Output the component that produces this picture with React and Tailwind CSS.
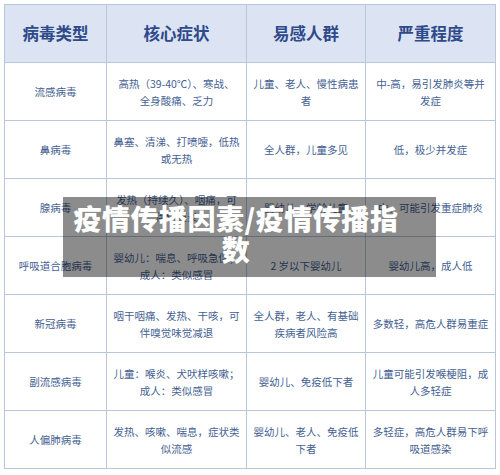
import React from "react";

const headers = ["病毒类型", "核心症状", "易感人群", "严重程度"];

const rows = [
  [["流感病毒"], ["高热（39-40℃）、寒战、", "全身酸痛、乏力"], ["儿童、老人、慢性病患", "者"], ["中-高，易引发肺炎等并", "发症"]],
  [["鼻病毒"], ["鼻塞、清涕、打喷嚏，低热", "或无热"], ["全人群，儿童多见"], ["低，极少并发症"]],
  [["腺病毒"], ["发热（持续久）、咽痛，可", "伴结膜炎"], ["婴幼儿、学龄儿童"], ["中，可能引发重症肺炎"]],
  [["呼吸道合胞病毒"], ["婴幼儿：喘息、呼吸急促；", "成人：类似感冒"], ["2 岁以下婴幼儿"], ["婴幼儿高，成人低"]],
  [["新冠病毒"], ["咽干咽痛、发热、干咳，可", "伴嗅觉味觉减退"], ["全人群，老人、有基础", "疾病者风险高"], ["多数轻，高危人群易重症"]],
  [["副流感病毒"], ["儿童：喉炎、犬吠样咳嗽；", "成人：类似感冒"], ["婴幼儿、免疫低下者"], ["儿童可能引发喉梗阻，成", "人多轻症"]],
  [["人偏肺病毒"], ["发热、咳嗽、喘息，症状类", "似流感"], ["婴幼儿、老人、免疫低", "下者"], ["多轻症，高危人群易下呼", "吸道感染"]],
];

const font = { fontFamily: '"Noto Sans CJK SC", "Noto Sans", sans-serif' };

export default function App() {
  return (
    <div className="relative w-[500px] h-[475px] bg-white overflow-hidden" style={font}>
      <div className="absolute left-[4px] top-[4px] grid grid-cols-[102px_140px_119px_130px] border-l border-t border-[#b9c7dc]">
        {headers.map((h) => (
          <div
            key={h}
            className="h-[58px] flex items-center justify-center bg-[#dce4f3] border-r border-b border-[#b9c7dc] text-[16.5px] font-bold text-[#2e4a8a]"
          >
            {h}
          </div>
        ))}
        {rows.map((row, i) =>
          row.map((cell, j) => (
            <div
              key={i + "-" + j}
              className="h-[58px] flex flex-col items-center justify-center border-r border-b border-[#b9c7dc] text-[10.5px] leading-[17px] text-[#455f92] whitespace-nowrap"
            >
              {cell.map((line) => (
                <span key={line}>{line}</span>
              ))}
            </div>
          ))
        )}
      </div>

      <div className="absolute left-[63px] top-[197px] w-[373px] h-[80px] pr-[27px] pb-[6px] bg-black/45 flex flex-col items-center justify-center text-white font-black text-[28px] leading-[31px] tracking-[0.5px] whitespace-nowrap">
        <span>疫情传播因素/疫情传播指</span>
        <span>数</span>
      </div>
    </div>
  );
}
